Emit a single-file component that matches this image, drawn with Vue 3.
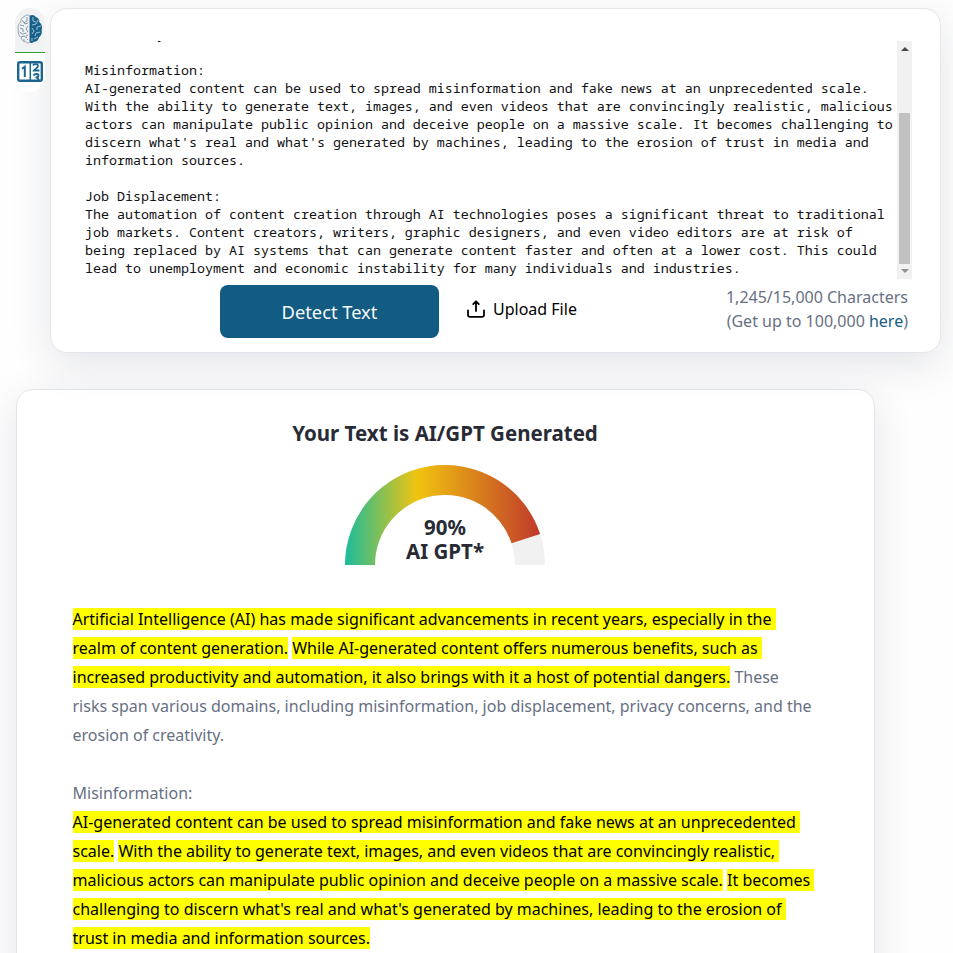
<script setup>
const inputLines = [
  'creativity.',
  '',
  'Misinformation:',
  'AI-generated content can be used to spread misinformation and fake news at an unprecedented scale.',
  'With the ability to generate text, images, and even videos that are convincingly realistic, malicious',
  'actors can manipulate public opinion and deceive people on a massive scale. It becomes challenging to',
  "discern what's real and what's generated by machines, leading to the erosion of trust in media and",
  'information sources.',
  '',
  'Job Displacement:',
  'The automation of content creation through AI technologies poses a significant threat to traditional',
  'job markets. Content creators, writers, graphic designers, and even video editors are at risk of',
  'being replaced by AI systems that can generate content faster and often at a lower cost. This could',
  'lead to unemployment and economic instability for many individuals and industries.'
]

const h = (text) => ({ text, marked: true })
const p = (text) => ({ text, marked: false })

const resultLines = [
  [h('Artificial Intelligence (AI) has made significant advancements in recent years, especially in the ')],
  [h('realm of content generation.'), p(' '), h('While AI-generated content offers numerous benefits, such as ')],
  [h('increased productivity and automation, it also brings with it a host of potential dangers.'), p(' These')],
  [p('risks span various domains, including misinformation, job displacement, privacy concerns, and the')],
  [p('erosion of creativity.')],
  [],
  [p('Misinformation:')],
  [h('AI-generated content can be used to spread misinformation and fake news at an unprecedented ')],
  [h('scale.'), p(' '), h('With the ability to generate text, images, and even videos that are convincingly realistic, ')],
  [h('malicious actors can manipulate public opinion and deceive people on a massive scale.'), p(' '), h('It becomes ')],
  [h("challenging to discern what's real and what's generated by machines, leading to the erosion of ")],
  [h('trust in media and information sources.')]
]
</script>

<template>
  <div class="page">
    <div class="top">
      <nav class="tools">
        <button class="tool active" aria-label="AI detector">
          <svg width="26" height="30" viewBox="0 0 26 30" fill="none">
            <path d="M12.5 1.5C10 .2 7.600 1.500 7 3 4.500 3.500 3.500 6 3.700 8 1 10 .5 13 1.300 16 .6 19 2 22 4 23.500 4.500 26.500 7 28 9 27.800 10.500 29.500 12 29 12.500 28.500Z" fill="#eef2f5" stroke="#8296a5" stroke-width=".8" />
            <path d="M13 1.500C15.500.2 18 1.500 18.700 3 21.500 3.500 22.500 6 22.300 8 25 10 25.500 13 24.700 16 25.400 19 24 22 22 23.500 21.500 26.500 19 28 17 27.800 15.500 29.500 14 29 13 28.500Z" fill="#17618b" />
            <path d="M10 3v4L7 9M5 6l3 4 3-1M7 12l-4-1M3 14l3 1v3M11 12l-2 3 2 3M2.500 18l3 2 4-1M4 23l3-1 3 2M7 25v2M11 21l-2 1M10 26l1-1" stroke="#8296a5" stroke-width="1" />
            <path d="M16 3v4l3 1M21 6l-2 4-4 1M24 12l-4 1v3M15 14l2 3-2 3M23 18l-4 1-1 3M21 23l-4 2M15 24v3" stroke="#a9c9d9" stroke-width=".9" />
          </svg>
        </button>
        <button class="tool" aria-label="Word counter">
          <svg width="26" height="21" viewBox="0 0 26 21" fill="none" stroke="#1c6590">
            <rect x="1.200" y="1.200" width="23.600" height="18.600" rx="1.800" stroke-width="2.400" />
            <path d="M13.300 1v19" stroke-width="1.500" />
            <path d="M5 7.800l2.800-2V16" stroke-width="2" />
            <path d="M16 4.500C17 2.500 21 2.500 21 5 21 6.500 18.500 7.500 17 9.500H22.500M16.500 14.500C17.500 12.500 21.500 12.500 21.500 14.500 21.500 16 20 16.300 18.500 16.300 20.500 16.300 21.500 17 21.500 19" stroke-width="1.800" />
          </svg>
        </button>
      </nav>

      <section class="card editor">
        <div class="textarea">
          <div class="source">
            <div v-for="(line, i) in inputLines" :key="i" class="source-line">{{ line }}</div>
          </div>
          <div class="scrollbar">
            <svg width="8" height="4" viewBox="0 0 8 4"><path d="M0 4L4 0L8 4Z" fill="#484848" /></svg>
            <div class="thumb"></div>
            <svg width="8" height="4" viewBox="0 0 8 4"><path d="M0 0L4 4L8 0Z" fill="#8f8f8f" /></svg>
          </div>
        </div>
        <div class="actions">
          <button class="detect">Detect Text</button>
          <button class="upload">
            <svg width="18" height="18" viewBox="0 0 18 18" fill="none" stroke="#000" stroke-width="1.800" stroke-linecap="round" stroke-linejoin="round">
              <path d="M1 10.500V15a1.800 1.800 0 0 0 1.800 1.800h12.400A1.800 1.800 0 0 0 17 15v-4.500M9 11V1.500M6.200 4.200L9 1.300l2.800 2.900" />
            </svg>
            <span>Upload File</span>
          </button>
          <div class="count">
            <div>1,245/15,000 Characters</div>
            <div>(Get up to 100,000 <a>here</a>)</div>
          </div>
        </div>
      </section>
    </div>

    <section class="card result">
      <h2>Your Text is AI/GPT Generated</h2>
      <div class="gauge">
        <svg width="200" height="100" viewBox="0 0 200 100">
          <defs>
            <linearGradient id="heat" gradientUnits="userSpaceOnUse" x1="0" y1="0" x2="195" y2="0">
              <stop offset="0" stop-color="#1abc9c" />
              <stop offset=".37" stop-color="#f1c40f" />
              <stop offset="1" stop-color="#c0392b" />
            </linearGradient>
          </defs>
          <path d="M0 100A100 100 0 0 1 200 100H170A70 70 0 0 0 30 100Z" fill="#f1f1f1" />
          <path d="M0 100A100 100 0 0 1 195.106 69.098L166.574 78.369A70 70 0 0 0 30 100Z" fill="url(#heat)" />
        </svg>
        <div class="score"><div>90%</div><div>AI GPT*</div></div>
      </div>
      <div class="report">
        <div v-for="(line, i) in resultLines" :key="i" class="report-line"><span v-for="(part, j) in line" :key="j" :class="{ marked: part.marked }">{{ part.text }}</span></div>
      </div>
    </section>
  </div>
</template>

<style>
body {
  background: #fefefe;
}
</style>

<style scoped>
.page {
  box-sizing: border-box;
  height: 953px;
  overflow: hidden;
  padding: 8px 12px 0 15px;
  font-family: "Noto Sans", sans-serif;
  font-size: 16px;
  color: #687083;
}
button {
  border: 0;
  padding: 0;
  background: none;
  font: inherit;
}
.top {
  display: flex;
  align-items: flex-start;
  gap: 5px;
}
.tools {
  position: relative;
  width: 30px;
  height: 84px;
  border-radius: 15px;
  overflow: hidden;
  background: #fff;
}
.tool {
  display: flex;
  width: 30px;
  height: 37px;
  align-items: center;
  justify-content: center;
}
.tool.active {
  box-sizing: border-box;
  height: 45px;
  padding-bottom: 2px;
  border-bottom: 1px solid #2da12d;
  background: #f1f2f4;
}
.card {
  box-sizing: border-box;
  border: 1px solid #e5e6eb;
  border-radius: 17px;
  background: #fff;
  box-shadow: 0 12px 40px rgba(36, 40, 70, 0.12);
}
.editor {
  width: 891px;
  height: 345px;
  padding: 32px 28px 0 34px;
}
.textarea {
  display: flex;
  justify-content: space-between;
  height: 238px;
  overflow: hidden;
}
.source {
  margin-top: -16px;
  font: 13.333px/18px "Noto Sans Mono", "DejaVu Sans Mono", monospace;
  color: #111;
  white-space: pre;
}
.source-line {
  height: 18px;
}
.scrollbar {
  box-sizing: border-box;
  display: flex;
  flex-direction: column;
  align-items: center;
  width: 15px;
  flex: none;
  padding: 6px 0;
  background: #f1f1f1;
}
.thumb {
  width: 11px;
  height: 151px;
  margin: auto 0 5px;
  background: #c1c1c1;
}
.actions {
  display: flex;
  align-items: flex-start;
  padding: 6px 4px 0 135px;
}
.detect {
  width: 219px;
  height: 53px;
  border-radius: 8px;
  background: #125b82;
  color: #f7fbff;
  font-size: 18.3px;
}
.upload {
  display: flex;
  align-items: center;
  gap: 8px;
  height: 48px;
  margin-left: 28px;
  color: #000;
}
.count {
  margin-left: auto;
  text-align: right;
  line-height: 24px;
}
.count a {
  color: #175d87;
}
.result {
  width: 859px;
  height: 700px;
  margin: 36px 0 0 1px;
  padding: 28px 56.5px 0 55.5px;
}
h2 {
  margin: 0;
  color: #282b35;
  font-size: 20.5px;
  line-height: 30px;
  text-align: center;
}
.gauge {
  display: grid;
  justify-content: center;
  height: 100px;
  margin-top: 17px;
}
.gauge svg,
.score {
  grid-area: 1 / 1;
}
.score {
  padding-top: 50px;
  color: #282b35;
  font-size: 20.5px;
  font-weight: 700;
  line-height: 24px;
  text-align: center;
}
.report {
  margin-top: 40px;
  line-height: 29px;
  white-space: pre;
}
.report-line {
  height: 29px;
}
.marked {
  background: #ff0;
  color: #000;
}
</style>
